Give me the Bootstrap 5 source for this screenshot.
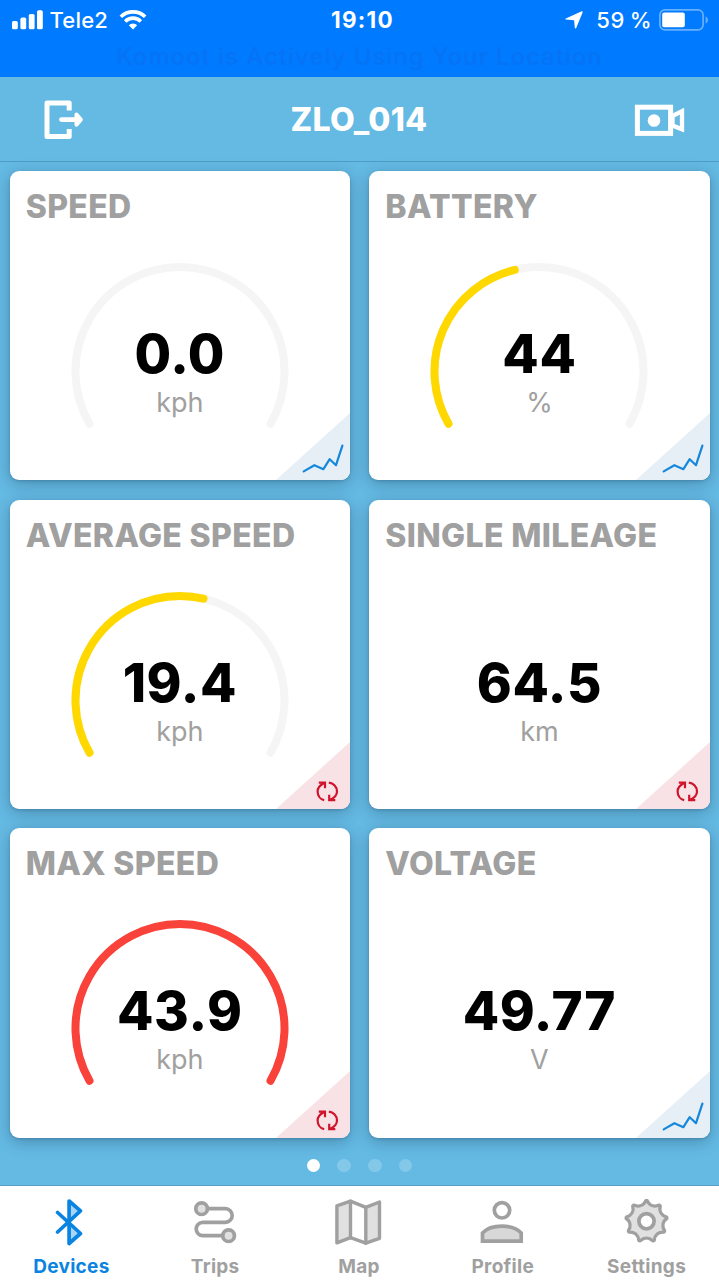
<!DOCTYPE html>
<html lang="en">
<head>
<meta charset="utf-8">
<meta name="viewport" content="width=device-width, initial-scale=1">
<title>ZLO_014</title>
<link href="https://cdn.jsdelivr.net/npm/bootstrap@5.3.0/dist/css/bootstrap.min.css" rel="stylesheet">
<style>
body{font-family:Inter,"Liberation Sans",sans-serif;background:#64bae3;height:1280px;overflow:hidden}
svg{display:block;flex:none}
.statusbar{height:77px;background:#007aff;color:#fff;font-size:22px;font-weight:500}
.status-row{height:40px;line-height:40px}
.status-left{padding-left:11.5px;gap:7px}
.carrier{letter-spacing:.2px}
.status-right{padding-right:9.5px}
.percent{margin:0 7px 0 13px;letter-spacing:.8px}
.clock{font-weight:700;font-size:22.5px;letter-spacing:1.3px;padding-left:6px}
.notice{font-size:24px;line-height:34px;font-weight:500;color:#0673f5;letter-spacing:.97px;height:37px}
.titlebar{height:85px;border-bottom:1px solid #4f9dc4;color:#fff;padding:1px 34px 0 44px}
.titlebar h1{font-size:32px;font-weight:800;line-height:84px;letter-spacing:.3px}
.tiles{display:grid;grid-template-columns:340.3px 340.3px;gap:19.3px;grid-auto-rows:309.4px;padding:9px 0 0 9.7px}
.tile{border:0;border-radius:9px;overflow:hidden;box-shadow:0 4px 16px rgba(0,20,50,.26),0 1px 3px rgba(0,20,50,.18)}
.tile h2{font-size:32px;font-weight:800;line-height:40px;letter-spacing:.35px;color:#a0a0a0;margin:16px 0 0 16px;white-space:nowrap}
.dial{display:grid;justify-items:center}
.dial>*{grid-area:1/1}
.dial svg{margin-top:35px}
.arc{fill:none;stroke-width:8;stroke-linecap:round}
.readout{padding-top:97px;text-align:center}
.num{font-size:53px;font-weight:800;line-height:60px;letter-spacing:.6px;color:#000}
.unit{font-size:27px;font-weight:400;line-height:38px;color:#a0a0a0}
.corner{position:absolute;right:0;bottom:0}
.dots{gap:17.2px;padding-top:21px}
.dots i{width:13.5px;height:13.5px;border-radius:50%;background:#83c8e9}
.dots i.on{background:#fff}
.tabs{height:95px;background:#fff;border-top:1px solid #5a9fc2;color:#a0a0a0;font-size:19px;font-weight:700;letter-spacing:.3px}
.tabs a{color:inherit;text-decoration:none;padding-top:12px;line-height:24px}
.tabs a.current{color:#0a84e0}
.tabs span{margin-right:1px}
.tabs svg{margin-bottom:9px;fill:none;stroke:currentColor;stroke-width:3.7;stroke-linejoin:round;stroke-linecap:round}
</style>
</head>
<body class="d-flex flex-column">
<svg width="0" height="0" class="position-absolute">
  <defs>
    <path id="ring" d="M18.5 161.75A104.5 104.5 0 1 1 199.5 161.75" pathLength="100"/>
    <g id="trend"><path d="M0 67L74 0V67Z" fill="#e6eef6"/><path d="M27.7 58.4L38.4 52.2L47.4 56.2L53.7 46.2L60 52.2L66.4 32.6" fill="none" stroke="#1488dc" stroke-width="2.2" stroke-linecap="round" stroke-linejoin="round"/></g>
    <g id="reset"><path d="M0 67L74 0V67Z" fill="#f9e2e6"/><path d="M48.2 58.2C44 57.3 41.6 53.5 41.6 49.3C41.6 45.7 43.8 43.2 48.6 40.8M42.8 40.7H49V46.2M52.8 40.6C57.5 41.2 61 45 61 49.5C61 53.2 58.5 56 53.6 58M53.2 52.7V58.2H59.3" fill="none" stroke="#d0142c" stroke-width="2.2"/></g>
  </defs>
</svg>

<header class="statusbar">
  <div class="status-row row g-0 row-cols-3">
    <div class="status-left d-flex align-items-center">
      <svg width="31" height="20" fill="#fff"><rect y="11" width="5.8" height="8.3" rx="1.6"/><rect x="8.4" y="7.6" width="5.8" height="11.7" rx="1.6"/><rect x="16.8" y="4" width="5.8" height="15.3" rx="1.6"/><rect x="25" y=".2" width="5.8" height="19.1" rx="1.6"/></svg>
      <span class="carrier">Tele2</span>
      <svg class="ms-1" width="28" height="20" viewBox="0 0 28 20" fill="none" stroke="#fff" stroke-width="3.6"><path d="M1.8 6.8A17.5 17.5 0 0 1 26.2 6.8"/><path d="M6.2 11.4A11 11 0 0 1 21.8 11.4"/><path d="M9.8 15.2A6 6 0 0 1 18.2 15.2L14 19.6Z" fill="#fff" stroke="none"/></svg>
    </div>
    <div class="text-center clock"><span>19:10</span></div>
    <div class="status-right d-flex align-items-center justify-content-end">
      <svg width="18" height="18"><path d="M.7 8.6Q-.1 8 .8 7.4L16.2.4Q18 0 17.6 1.6L11.2 16.9Q10.4 18 9.8 16.8L9.1 9.2Z" fill="#fff"/></svg>
      <span class="percent">59&thinsp;%</span>
      <svg width="50" height="22"><rect x=".9" y=".9" width="43.2" height="20" rx="5" fill="none" stroke="#67b0ff" stroke-width="1.7"/><rect x="3.2" y="3.6" width="22.6" height="14.6" rx="2" fill="#fff"/><path d="M46.6 7.2Q49 8.5 49 11T46.6 14.8Z" fill="#67b0ff"/></svg>
    </div>
  </div>
  <div class="notice text-center">Komoot is Actively Using Your Location</div>
</header>

<nav class="titlebar d-flex align-items-center justify-content-between">
  <svg width="40" height="40"><path d="M25.2 10.5V3H3V36.6H25.2V29" fill="none" stroke="#fff" stroke-width="5" stroke-linejoin="round"/><path d="M17.5 19.6H32" stroke="#fff" stroke-width="4.8" stroke-linecap="round"/><path d="M32.5 14.5L36.8 19.6L32.5 24.7Z" fill="#fff" stroke="#fff" stroke-width="4" stroke-linejoin="round"/></svg>
  <h1 class="m-0"><span>ZLO_014</span></h1>
  <svg width="51" height="32" fill="none" stroke="#fff"><rect x="3.4" y="3.2" width="33.2" height="26.2" stroke-width="5"/><circle cx="20" cy="16.5" r="6.3" fill="#fff" stroke="none"/><path d="M38.5 12L48 7.2V25.3L38.5 21.5Z" stroke-width="4.3"/></svg>
</nav>

<main class="flex-grow-1">
  <div class="tiles">
    <section class="tile card"><h2><span>SPEED</span></h2>
      <div class="dial"><svg width="218" height="180"><use href="#ring" class="arc" stroke="#f5f5f5"/></svg>
        <div class="readout"><div class="num"><span>0.0</span></div><div class="unit">kph</div></div></div>
      <svg class="corner" width="74" height="67"><use href="#trend"/></svg></section>
    <section class="tile card"><h2><span>BATTERY</span></h2>
      <div class="dial"><svg width="218" height="180"><use href="#ring" class="arc" stroke="#f5f5f5"/><use href="#ring" class="arc" stroke="#ffd800" stroke-dasharray="44.4 200"/></svg>
        <div class="readout"><div class="num"><span>44</span></div><div class="unit">%</div></div></div>
      <svg class="corner" width="74" height="67"><use href="#trend"/></svg></section>
    <section class="tile card"><h2><span>AVERAGE SPEED</span></h2>
      <div class="dial"><svg width="218" height="180"><use href="#ring" class="arc" stroke="#f5f5f5"/><use href="#ring" class="arc" stroke="#ffd800" stroke-dasharray="55.4 200"/></svg>
        <div class="readout"><div class="num"><span>19.4</span></div><div class="unit">kph</div></div></div>
      <svg class="corner" width="74" height="67"><use href="#reset"/></svg></section>
    <section class="tile card"><h2><span>SINGLE MILEAGE</span></h2>
      <div class="dial"><div class="readout"><div class="num"><span>64.5</span></div><div class="unit">km</div></div></div>
      <svg class="corner" width="74" height="67"><use href="#reset"/></svg></section>
    <section class="tile card"><h2><span>MAX SPEED</span></h2>
      <div class="dial"><svg width="218" height="180"><use href="#ring" class="arc" stroke="#f8423a"/></svg>
        <div class="readout"><div class="num"><span>43.9</span></div><div class="unit">kph</div></div></div>
      <svg class="corner" width="74" height="67"><use href="#reset"/></svg></section>
    <section class="tile card"><h2><span>VOLTAGE</span></h2>
      <div class="dial"><div class="readout"><div class="num"><span>49.77</span></div><div class="unit">V</div></div></div>
      <svg class="corner" width="74" height="67"><use href="#trend"/></svg></section>
  </div>
  <div class="dots d-flex justify-content-center"><i class="on"></i><i></i><i></i><i></i></div>
</main>

<nav class="tabs row row-cols-5 g-0 text-center">
  <a class="current d-flex flex-column align-items-center" href="#"><svg width="48" height="48"><path d="M21.1 3L32.5 12.8L21.1 23.6ZM21.1 24.6L32.5 35.5L21.1 45.5Z" fill="#a8d5f6" stroke="none"/><path d="M9.6 14.5L32.5 35.5L21.1 45.5V3L32.5 12.8L9.6 34"/></svg><span>Devices</span></a>
  <a class="d-flex flex-column align-items-center" href="#"><svg width="48" height="48"><path d="M15.4 10.7H33.4a6.8 6.8 0 0 1 0 13.6H10.9a6.7 6.7 0 0 0 0 13.4H31"/><circle cx="9.6" cy="10.7" r="5.8" fill="#e0e0e0"/><circle cx="36.6" cy="37.7" r="5.8" fill="#e0e0e0"/></svg><span>Trips</span></a>
  <a class="d-flex flex-column align-items-center" href="#"><svg width="48" height="48" style="stroke-width:3.4"><path d="M1.9 7.9L15.5 3.2V39.7L1.9 44.8ZM30.8 9.3L44.5 4V40.3L30.8 45.2Z" fill="#e0e0e0"/><path d="M15.5 3.2L30.8 9.3M15.5 39.7L30.8 45.2"/></svg><span>Map</span></a>
  <a class="d-flex flex-column align-items-center" href="#"><svg width="48" height="48" style="stroke-linejoin:miter"><circle cx="23" cy="12.3" r="7.7"/><path d="M3.5 43.1V35C8 30.1 15 28.1 22.9 28.1S38 30.1 42.2 35V43.1Z" fill="#d8d8d8"/></svg><span>Profile</span></a>
  <a class="d-flex flex-column align-items-center" href="#"><svg width="48" height="48" style="stroke-width:3.3"><path id="gear" fill="#e0e0e0"/><circle cx="23.5" cy="23.3" r="7.6" fill="#fff" stroke-width="3.7"/></svg><span>Settings</span></a>
</nav>
<script>
// Nine-tooth gear outline: narrow rounded tip, then a curved valley to the next tooth.
const at = (r, deg) => {
  const a = deg * Math.PI / 180;
  return (23.5 + r * Math.sin(a)).toFixed(2) + ' ' + (23.3 - r * Math.cos(a)).toFixed(2);
};
let d = '';
for (let k = 0; k < 9; k++) {
  const t = k * 40;
  d += (k ? 'L' : 'M') + at(20.6, t - 2) + 'L' + at(20.6, t + 2) + 'C' + at(16, t + 11) + ' ' + at(16, t + 29) + ' ' + at(20.6, t + 38);
}
document.getElementById('gear').setAttribute('d', d + 'Z');
</script>
<script src="https://cdn.jsdelivr.net/npm/bootstrap@5.3.0/dist/js/bootstrap.bundle.min.js"></script>
</body>
</html>
